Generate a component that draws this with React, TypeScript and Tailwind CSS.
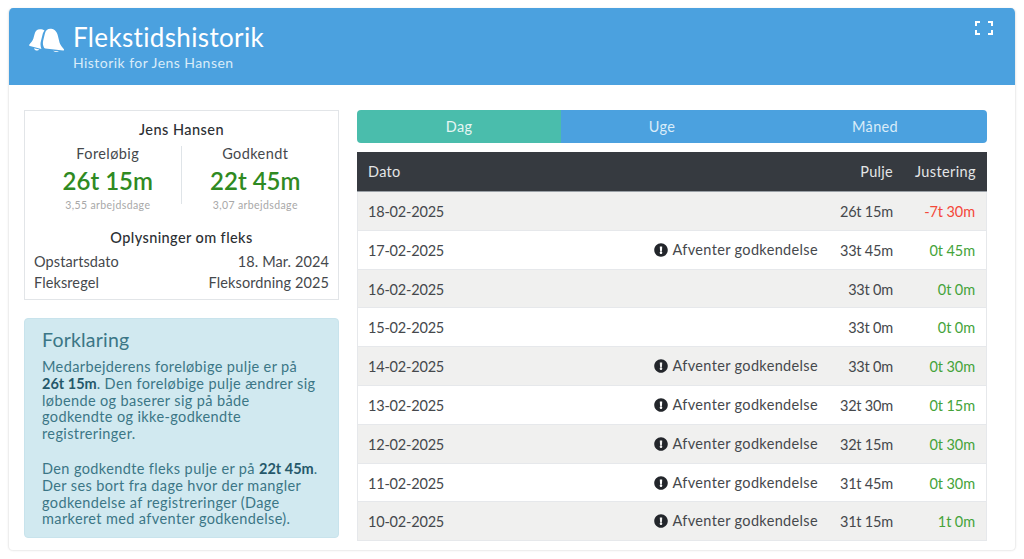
import { FaExclamationCircle } from "react-icons/fa";

type Row = {
	date: string;
	pending: boolean;
	pool: string;
	adjust: string;
};

const rows: Row[] = [
	{ date: "18-02-2025", pending: false, pool: "26t 15m", adjust: "-7t 30m" },
	{ date: "17-02-2025", pending: true, pool: "33t 45m", adjust: "0t 45m" },
	{ date: "16-02-2025", pending: false, pool: "33t 0m", adjust: "0t 0m" },
	{ date: "15-02-2025", pending: false, pool: "33t 0m", adjust: "0t 0m" },
	{ date: "14-02-2025", pending: true, pool: "33t 0m", adjust: "0t 30m" },
	{ date: "13-02-2025", pending: true, pool: "32t 30m", adjust: "0t 15m" },
	{ date: "12-02-2025", pending: true, pool: "32t 15m", adjust: "0t 30m" },
	{ date: "11-02-2025", pending: true, pool: "31t 45m", adjust: "0t 30m" },
	{ date: "10-02-2025", pending: true, pool: "31t 15m", adjust: "1t 0m" },
];

const cell = "border-b border-[#e6e8eb] first:border-l last:border-r pt-[2px]";

function BellsIcon() {
	return (
		<svg viewBox="0 0 36 24" className="w-[36px] h-[24px] fill-white">
			<path d="M11 1.200C8 1.200 6.300 3 5.600 6L4.300 10.800C3.600 13 2 14.500.4 16.500c-.5.700-.2 1.300.5 1.500l11.500 2.900c-1-2.500-1.200-5-.5-7.700l1.600-6.400c.4-1.800 1-3.200 2-4.300C14.500 1.700 12.800 1.200 11 1.200z" />
			<path d="M22.200.8c-3.300-.4-5.600 1.500-6.300 4.600l-1.700 7.200c-.6 2.600-.3 5 .9 7.200.3.500.7.700 1.300.8l17.600 2c.9.100 1.300-.6.900-1.300-1.500-2.300-3.500-3.900-4.300-6.600L29 8.300C28.300 4.300 26 1.200 22.200.8z" />
			<path d="M5 20.200l5.300 1.300c-.8 1-1.800 1.300-3 1-1.200-.3-2-1.100-2.300-2.300zM24 22.800l5.800.6c-.8.600-1.700.700-2.900.6-1.200-.1-2.200-.5-2.900-1.200z" />
		</svg>
	);
}

function ExpandIcon() {
	return (
		<svg viewBox="0 0 18 14" className="w-[18px] h-[14px]" fill="none" stroke="white" strokeWidth="2">
			<path d="M1 5V1h4M13 1h4v4M17 9v4h-4M5 13H1V9" />
		</svg>
	);
}

export default function App() {
	return (
		<div className="bg-white min-h-[559px] px-[8px] pt-[8px] text-[#45484c] font-['Lato','Noto_Sans',sans-serif]">
			<div className="h-[543px] rounded-[5px] border border-[#eeeeee] border-t-0 shadow-[0_0_2px_rgba(0,0,0,0.08)] overflow-hidden bg-white">
				<header className="h-[77px] bg-[#4ba1df] flex justify-between pl-[20px] pr-[22px] text-white">
					<div className="flex items-start">
						<div className="mt-[20px] mr-[8px]">
							<BellsIcon />
						</div>
						<div>
							<h1 className="text-[26px] leading-[32px] mt-[13px] font-normal tracking-[0.35px]">Flekstidshistorik</h1>
							<p className="text-[14px] leading-[18px] mt-[1px] text-[#d9ecf9] tracking-[0.45px]">Historik for Jens Hansen</p>
						</div>
					</div>
					<div className="mt-[13px]">
						<ExpandIcon />
					</div>
				</header>

				<main className="flex gap-[18px] pl-[15px] pr-[28px] pt-[25px]">
					<aside className="w-[315px] shrink-0">
						<section className="h-[190px] border border-[#e2e5e8] px-[9px] pt-[10px]">
							<h2 className="text-center text-[14.500px] leading-[18px] font-medium text-[#2c2f33] tracking-[0.45px]">Jens Hansen</h2>
							<div className="flex mt-[5px]">
								<Stat title="Foreløbig" value="26t 15m" days="3,55 arbejdsdage" border />
								<Stat title="Godkendt" value="22t 45m" days="3,07 arbejdsdage" />
							</div>
							<h2 className="text-center text-[14.500px] leading-[18px] font-medium text-[#2c2f33] mt-[17px] tracking-[0.4px]">Oplysninger om fleks</h2>
							<div className="flex justify-between text-[14.500px] leading-[21px] mt-[4px] tracking-[0.1px]">
								<span>Opstartsdato</span>
								<span>18. Mar. 2024</span>
							</div>
							<div className="flex justify-between text-[14.500px] leading-[21px] tracking-[0.1px]">
								<span>Fleksregel</span>
								<span>Fleksordning 2025</span>
							</div>
						</section>

						<section className="h-[220px] mt-[18px] bg-[#d1e9f0] rounded-[4px] border border-[#c8e3ec] pl-[17px] pr-[17px] pt-[9px] text-[#3b7686]">
							<h3 className="text-[19.500px] leading-[24px] font-normal tracking-[0.2px]">Forklaring</h3>
							<p className="text-[14.500px] leading-[16.800px] mt-[7px] tracking-[0.38px]">
								Medarbejderens foreløbige pulje er på <span className="whitespace-nowrap"><b className="font-bold text-[#25586a] tracking-normal">26t 15m</b>.</span> Den foreløbige pulje ændrer sig løbende og baserer sig på både godkendte og ikke-godkendte registreringer.
							</p>
							<p className="text-[14.500px] leading-[16.800px] mt-[18px] tracking-[0.38px]">
								Den godkendte fleks pulje er på <span className="whitespace-nowrap"><b className="font-bold text-[#25586a] tracking-normal">22t 45m</b>.</span> Der ses bort fra dage hvor der mangler godkendelse af registreringer (Dage markeret med afventer godkendelse).
							</p>
						</section>
					</aside>

					<div className="flex-1 min-w-0">
						<nav className="grid grid-cols-[204px_202px_1fr] h-[33px] rounded-[4px] overflow-hidden text-[14.500px] leading-[33px] text-center text-[#d9ecf9] tracking-[0.3px]">
							<span className="bg-[#4abdac] text-[#e6f6f3]">Dag</span>
							<span className="bg-[#4ba1df]">Uge</span>
							<span className="bg-[#4ba1df]">Måned</span>
						</nav>
						<table className="w-full mt-[9px] border-separate border-spacing-0 text-[14.500px]">
							<thead>
								<tr className="h-[40px] bg-[#363a40] text-[#e4e5e6]">
									<th className="text-left font-normal pl-[11px] tracking-[0.3px] border-b border-[#9aa0a6]">Dato</th>
									<th className="border-b border-[#9aa0a6]" />
									<th className="text-right font-normal w-[75px] tracking-[0.3px] border-b border-[#9aa0a6]">Pulje</th>
									<th className="text-right font-normal w-[94px] pr-[11px] tracking-[0.4px] border-b border-[#9aa0a6]">Justering</th>
								</tr>
							</thead>
							<tbody>
								{rows.map((row) => (
									<tr key={row.date} className="h-[38.800px] odd:bg-[#f0f0ef] even:bg-white">
										<td className={`${cell} pl-[10px] tracking-[-0.2px]`}>{row.date}</td>
										<td className={`${cell} text-right`}>
											{row.pending && (
												<span className="inline-flex items-center gap-[4px] tracking-[0.35px]">
													<FaExclamationCircle className="w-[14px] h-[14px] text-[#23262b]" />
													Afventer godkendelse
												</span>
											)}
										</td>
										<td className={`${cell} text-right tracking-[-0.2px]`}>{row.pool}</td>
										<td className={`${cell} text-right pr-[11px] tracking-[-0.1px] ${row.adjust.startsWith("-") ? "text-[#f4483a]" : "text-[#45a33a]"}`}>{row.adjust}</td>
									</tr>
								))}
							</tbody>
						</table>
					</div>
				</main>
			</div>
		</div>
	);
}

function Stat({ title, value, days, border }: { title: string; value: string; days: string; border?: boolean }) {
	return (
		<div className={border ? "relative flex-1 text-center" : "flex-1 text-center"}>
			{border && <span className="absolute right-0 top-[2px] h-[58px] w-px bg-[#dfe4e8]" />}
			<div className="text-[14.500px] leading-[20px] tracking-[0.4px]">{title}</div>
			<div className="text-[24px] leading-[30px] font-semibold text-[#2f8a22] mt-[2px]">{value}</div>
			<div className="text-[10.500px] leading-[14px] text-[#a8a8a8] mt-[2px] tracking-[0.4px]">{days}</div>
		</div>
	);
}
